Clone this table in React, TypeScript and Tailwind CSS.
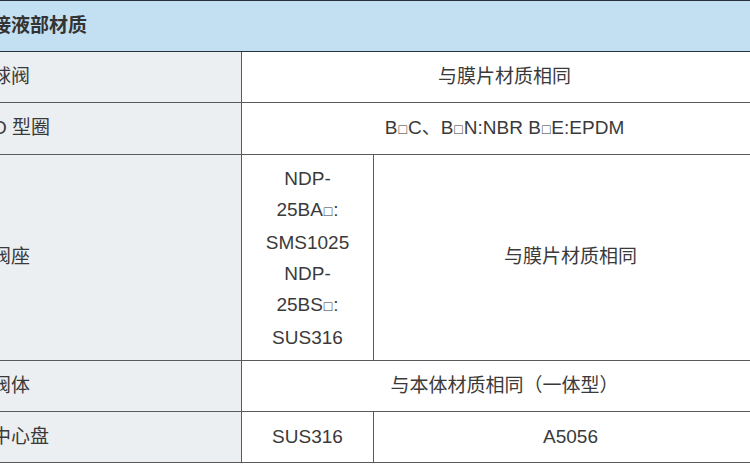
const Box = () => <span className="mx-[1px] text-[14px] align-[0px]">□</span>;

const cell = 'border border-[#5a5a5a] text-center';
const label = 'border border-[#5a5a5a] bg-[#eceff1] text-left pl-[15px]';

export default function App() {
  return (
    <div className="w-[750px] h-[464px] overflow-hidden bg-white">
      <table
        className="-ml-[24px] w-[792px] table-fixed border-collapse text-[19px] text-[#3a3a3a]"
        style={{ fontFamily: '"Liberation Sans", "Noto Sans CJK SC", sans-serif' }}
      >
        <colgroup>
          <col className="w-[265px]" />
          <col className="w-[132px]" />
          <col />
        </colgroup>
        <tbody>
          <tr className="h-[51px]">
            <th
              colSpan={3}
              className="border border-[#26303c] bg-[#c3dff2] text-left pl-[15px] font-bold text-[#333]"
            >
              接液部材质
            </th>
          </tr>
          <tr className="h-[51px]">
            <td className={label}>球阀</td>
            <td colSpan={2} className={cell}>与膜片材质相同</td>
          </tr>
          <tr className="h-[52px]">
            <td className={label}>O 型圈</td>
            <td colSpan={2} className={cell}>
              B<Box />C、B<Box />N:NBR B<Box />E:EPDM
            </td>
          </tr>
          <tr className="h-[206px]">
            <td className={label}>阀座</td>
            <td className={`${cell} leading-[31px]`}>
              NDP-
              <br />
              25BA<Box />:
              <br />
              SMS1025
              <br />
              NDP-
              <br />
              25BS<Box />:
              <br />
              SUS316
            </td>
            <td className={cell}>与膜片材质相同</td>
          </tr>
          <tr className="h-[51px]">
            <td className={label}>阀体</td>
            <td colSpan={2} className={cell}>与本体材质相同（一体型）</td>
          </tr>
          <tr className="h-[51px]">
            <td className={label}>中心盘</td>
            <td className={cell}>SUS316</td>
            <td className={cell}>A5056</td>
          </tr>
        </tbody>
      </table>
    </div>
  );
}
